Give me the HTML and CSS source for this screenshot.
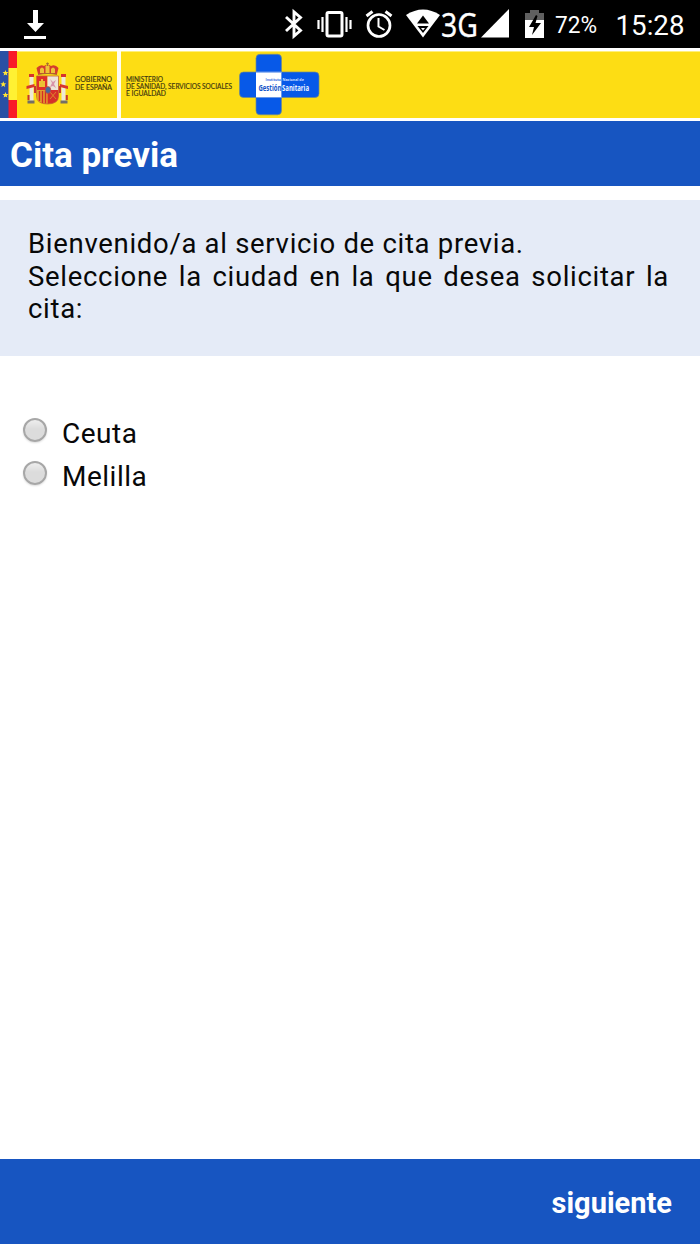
FILE: index.html
```html
<!DOCTYPE html>
<html lang="es">
<head>
<meta charset="utf-8">
<title>Cita previa</title>
<link rel="stylesheet" href="styles.css">
</head>
<body>
<div class="screen">
  <div class="status">
    <svg class="download" width="24" height="32" viewBox="23 8 24 32" fill="#fff"><path d="M33 10h5v13h6L35.500 32 27 23h6zM24 36h22v3H24z"/></svg>
    <svg class="indicators" width="266" height="48" viewBox="280 0 266 48" fill="none" stroke="#fff">
      <path d="M286 17l14.500 13.500-6.500 5.500V12l6.500 5.500-14.500 13.500" stroke-width="2.900"/>
      <path d="M318.500 20v9M322.500 17v15M346.500 17v15M350.500 20v9" stroke-width="2.200"/>
      <rect x="327" y="12.500" width="15" height="23.500" rx="1.500" stroke-width="3"/>
      <circle cx="379" cy="25.500" r="11" stroke-width="2.700"/>
      <path d="M366.500 16l6-4.500M391.500 16l-6-4.500" stroke-width="3"/>
      <path d="M378.500 18v8.500l6 3.500" stroke-width="2"/>
      <path d="M406 15Q423 4 440 15L423 37.500z" fill="#fff" stroke="none"/>
      <path d="M423 15.500l6 8h-12zM417.500 26h11L423 33z" fill="#000" stroke="none"/>
      <path d="M421 28h4l-2 2.500z" fill="#fff" stroke="none"/>
      <text class="network" x="441" y="37" textLength="37" lengthAdjust="spacingAndGlyphs">3G</text>
      <path d="M509 9v28.500h-28z" fill="#fff" stroke="none"/>
      <path d="M525 20v-7h5v-3h9v3h5v7z" fill="#606060" stroke="none"/>
      <path d="M525 20h19v18h-19z" fill="#fff" stroke="none"/>
      <path d="M536 15l-7 12h5l-2 8 9-12h-5.500l2-7z" fill="#000" stroke="none"/>
    </svg>
    <svg class="clock" width="140" height="48" viewBox="550 0 140 48" fill="#fff">
      <text x="555" y="33" font-size="24" textLength="42" lengthAdjust="spacingAndGlyphs">72%</text>
      <text x="615.500" y="35" font-size="28" textLength="69" lengthAdjust="spacingAndGlyphs">15:28</text>
    </svg>
  </div>

  <div class="banner">
    <svg class="logos" width="330" height="67" viewBox="0 51 330 67">
      <path fill="#2950a4" d="M0 51h9v67H0z"/>
      <path fill="#f91b28" d="M8.500 51H17v67H8.500z"/>
      <path fill="#fff133" d="M8.500 68H17v32H8.500z"/>
      <g fill="#ffe735">
        <path id="star" d="M5.500 70l.8 2 2.200.1-1.700 1.400.6 2.100-1.900-1.200-1.900 1.200.6-2.100-1.700-1.400 2.200-.1z"/>
        <use href="#star" x="-2.200" y="11.300"/>
        <use href="#star" y="22"/>
      </g>
      <!-- Escudo de España -->
      <g>
        <path fill="#eee9d5" d="M29.500 77h4v24h-4zM61.500 77h4v24h-4z"/>
        <path fill="#d8342b" d="M29 74h5v3h-5zM61 74h5v3h-5zM26.500 86l8-2v3l-8 2zM60 84l8 2v3l-8-2z"/>
        <path d="M28.500 95v5M35 86v7M66.800 95v5M60 86v7" stroke="#c7352d" stroke-width="2"/>
        <path fill="#746e65" d="M27.500 100.500h7v3h-7zM60.500 100.500h7v3h-7z"/>
        <path fill="#df2f2a" d="M37 76h10.500v14H37z"/>
        <path fill="#ede4d8" d="M47.500 76h11v14h-11z"/>
        <path fill="#e2a02c" d="M37 90h10.500v14q-10.500 0-10.500-8z"/>
        <path fill="#d62f2a" d="M47.500 90h11v6q0 8-11 8z"/>
        <path d="M39.500 91v10M42.500 91v12M45.500 91v12.500" stroke="#d52b27" stroke-width="1.400"/>
        <path d="M50 92l6 7M56 92l-6 7" stroke="#dc9a2a" stroke-width=".8"/>
        <path d="M39 87v-6h2v-2h2v2h2v6z" fill="#ecc034"/>
        <path d="M50 79l3 3 3-2-2 4 2 4-3-2-3 1 2-4z" fill="#d993a8"/>
        <ellipse cx="48" cy="90" rx="2.800" ry="3.500" fill="#46699c" stroke="#d6432e" stroke-width=".6"/>
        <path d="M36.500 76h22v20q0 8-11 8t-11-8z" fill="none" stroke="#c4632d" stroke-width=".8"/>
        <path d="M38 74l-1.500-6q4-4 7.500-2 3.500-3 7 0 4-2 7.500 2L57 74z" fill="#d43d2d"/>
        <path d="M40 73v-4q2-3 4 0v4M45.500 73v-7q2-2 4 0v7M51 73v-4q2-3 4 0v4" fill="#edc337"/>
        <path d="M38 74.500q10-2 19 0M47.500 62.500v3.500M46.200 63.500h2.600" fill="none" stroke="#a56f31" stroke-width="1.200"/>
      </g>
      <path fill="#fffdf0" d="M117 51h4v67h-4z"/>
      <g class="ministry">
        <text x="75" y="82.300" textLength="37" lengthAdjust="spacingAndGlyphs">GOBIERNO</text>
        <text x="75" y="89.500" textLength="37" lengthAdjust="spacingAndGlyphs">DE ESPAÑA</text>
        <text x="126" y="82" textLength="37" lengthAdjust="spacingAndGlyphs">MINISTERIO</text>
        <text x="126" y="89" textLength="106" lengthAdjust="spacingAndGlyphs">DE SANIDAD, SERVICIOS SOCIALES</text>
        <text x="126" y="96" textLength="40" lengthAdjust="spacingAndGlyphs">E IGUALDAD</text>
      </g>
      <g fill="#0759e8" stroke="#718b8a" stroke-width=".7">
        <rect x="256" y="54.300" width="25.500" height="60.500" rx="4"/>
        <rect x="239.500" y="72" width="79.500" height="25.500" rx="4"/>
      </g>
      <path fill="#0759e8" d="M256.400 71h24.700v28h-24.700z"/>
      <path d="M256 72h25.500M256 97.500h25.500M281.500 72v25.500" stroke="#85a9e5" stroke-width=".8"/>
      <path fill="#fff" d="M256 72.500h25v24.500h-25z"/>
      <g class="ingesa">
        <text transform="translate(265.500 81) scale(.85 1)" font-size="4.200" fill="#3b73df">Instituto</text>
        <text transform="translate(282.500 81) scale(.86 1)" font-size="4.200" fill="#d5e3ff">Nacional de</text>
        <text transform="translate(258.500 91) scale(.68 1)" font-size="8.800" fill="#1755c8">Gestión</text>
        <text transform="translate(282 91) scale(.68 1)" font-size="8.800" fill="#f2f6ff">Sanitaria</text>
      </g>
    </svg>
  </div>

  <header class="title"><h1>Cita previa</h1></header>
  <div class="intro">
    <p>Bienvenido/a al servicio de cita previa.</p>
    <p class="justified">Seleccione la ciudad en la que desea solicitar la cita:</p>
  </div>
  <form class="cities">
    <label class="city"><input class="radio" type="radio" name="city"><span>Ceuta</span></label>
    <label class="city"><input class="radio" type="radio" name="city"><span>Melilla</span></label>
  </form>
  <footer class="footer"><button class="next">siguiente</button></footer>
</div>
</body>
</html>
```

FILE: styles.css
```css
* { box-sizing: border-box; }
body { margin: 0; background: #fff; color: #080808; font-family: Roboto, sans-serif; }
.screen { display: flex; flex-direction: column; width: 700px; height: 1244px; }
.status { display: flex; align-items: center; height: 48px; background: #000; flex: none; }
.status svg { display: block; flex: none; }
.download { margin-left: 23px; }
.indicators { margin-left: 233px; }
.clock { margin-left: 4px; }
.network { font: 33px "Noto Sans", sans-serif; fill: #fff; stroke: #fff; stroke-width: .3px; }
.banner { height: 73px; flex: none; background: #fddd14; border-top: 3px solid #fff; border-bottom: 3px solid #fff; box-shadow: inset 0 1px #fff07a; }
.logos { display: block; }
.ministry { font: 6.6px Lato, sans-serif; fill: #3d3610; stroke: #3d3610; stroke-width: .15px; }
.ingesa { font-family: "Open Sans", sans-serif; font-weight: 700; }
.title { display: flex; align-items: center; height: 65px; padding: 3px 10px 0; background: #1755c1; flex: none; }
.title h1 { margin: 0; font-size: 35px; line-height: 41px; font-weight: 700; color: #fff; }
.intro { height: 156px; margin-top: 14px; padding: 28px 31px 0 28px; background: #e5ebf7; flex: none; font-size: 27.5px; line-height: 32.5px; letter-spacing: .7px; }
.intro p { margin: 0; }
.justified { text-align: justify; }
.cities { display: flex; flex-direction: column; flex: 1; padding: 56px 23px 0; }
.city { display: flex; align-items: flex-start; height: 43px; gap: 15px; font-size: 28px; line-height: 43px; letter-spacing: .5px; }
.radio { appearance: none; flex: none; width: 24px; height: 24px; margin: 6px 0 0; border: 2px solid #a7a7a7; border-radius: 50%; background: linear-gradient(#eee, #dcdcdc 45%, #dcdcdc); box-shadow: 0 1px 2px #ddd; }
.footer { display: flex; align-items: center; justify-content: flex-end; height: 85px; padding: 3px 28px 0; background: #1755c1; flex: none; }
.next { padding: 0; border: 0; background: none; color: #fff; font: 700 29px/34px Roboto, sans-serif; }
```
